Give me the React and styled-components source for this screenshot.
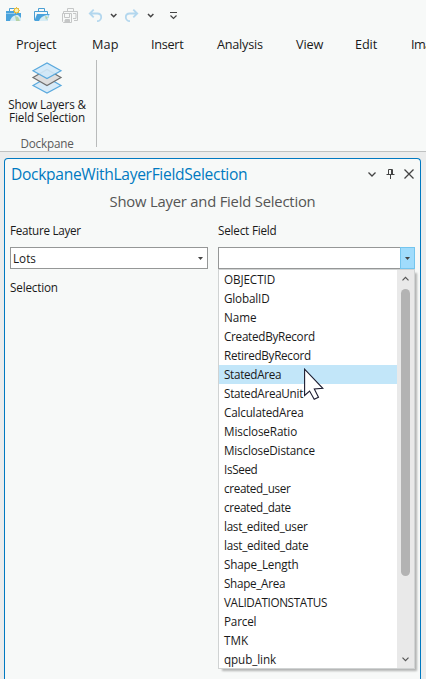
import React from 'react';
import styled, { createGlobalStyle } from 'styled-components';

const Global = createGlobalStyle`
  * { box-sizing: border-box; }
  html, body { margin: 0; background: #ebecec; }
  body {
    width: 426px; height: 679px; overflow: hidden;
    font-family: "Open Sans", "Noto Sans", sans-serif;
    font-size: 11.7px; color: #1a1a1a;
  }
`;

const Window = styled.div`
  width: 426px; height: 679px; overflow: hidden;
  display: flex; flex-direction: column;
`;

const Ribbon = styled.header`
  flex: none; height: 152px;
  background: #f7f9f8;
  border-bottom: 1px solid #bfc1c1;
  display: flex; flex-direction: column;
`;

const QuickAccess = styled.div`
  height: 31px; flex: none;
  display: flex; align-items: flex-start;
  svg { display: block; }
`;

const Tabs = styled.nav`
  height: 26px; flex: none;
  display: flex; align-items: center;
  padding-left: 16px;
  overflow: hidden;
`;

const Tab = styled.span`
  flex: none;
  width: ${(p) => p.$slot}px;
  font-size: 12.7px; line-height: 18px;
  letter-spacing: ${(p) => p.$spacing || 0}px;
  white-space: nowrap;
`;

const RibbonGroup = styled.section`
  width: 97px; height: 87px; margin-top: 3px;
  border-right: 1px solid #b9bbbb;
  display: flex; flex-direction: column; align-items: center;
  padding-right: 2px;
`;

const RibbonButton = styled.div`
  display: flex; flex-direction: column; align-items: center;
  text-align: center; line-height: 13px; white-space: nowrap;
  letter-spacing: ${(p) => p.$spacing}px;
  svg { display: block; margin: 2px 0 4px; }
`;

const GroupName = styled.span`
  margin-top: 11px; color: #5a5a5a; line-height: 16px; letter-spacing: -0.2px;
`;

const Pane = styled.main`
  margin: 6px 5px 0 4px; flex: 1;
  border: 1px solid #0079c1; border-bottom: 0;
  border-radius: 4px 4px 0 0;
  background: #f7f9f8;
  padding: 0 5px;
`;

const PaneHeader = styled.div`
  height: 30px; padding: 0 0 0 1px;
  display: flex; align-items: center; justify-content: space-between;
`;

const PaneTitle = styled.h1`
  margin: 0; font-weight: 400; font-size: 15.6px; line-height: 22px;
  color: #0079c1; letter-spacing: ${(p) => p.$spacing}px; white-space: nowrap;
`;

const PaneTools = styled.div`
  display: flex; align-items: center; height: 14px;
  svg { display: block; }
`;

const Subtitle = styled.h2`
  margin: 1px 0 0 0; font-weight: 400; font-size: 14.8px; line-height: 22px;
  color: #555; text-align: center; letter-spacing: ${(p) => p.$spacing}px;
  white-space: nowrap;
`;

const Fields = styled.div`
  display: grid; grid-template-columns: 198px 197px; column-gap: 10px;
  margin-top: 10px;
`;

const Field = styled.div`
  display: flex; flex-direction: column;
`;

const Label = styled.label`
  line-height: 16px; height: 25px;
  letter-spacing: ${(p) => p.$spacing || 0}px;
`;

const Combo = styled.div`
  height: 22px; border: 1px solid #959797; background: #fff;
  display: flex; align-items: center; justify-content: space-between;
  padding-left: 2px;
`;

const ComboArrow = styled.div`
  width: ${(p) => (p.$open ? 15 : 14)}px; height: 22px; flex: none;
  display: flex; align-items: center; justify-content: center;
  margin-right: ${(p) => (p.$open ? -1 : 0)}px;
  background: ${(p) => (p.$open ? '#a0dcfc' : 'transparent')};
  border: 1px solid ${(p) => (p.$open ? '#74c5ee' : 'transparent')};
`;

const Note = styled.div`
  margin-top: 10px; line-height: 16px; letter-spacing: -0.17px;
`;

const Anchor = styled.div`
  position: relative;
`;

const Menu = styled.div`
  position: absolute; left: 0; top: 0; width: 197px; height: 400px;
  border: 1px solid #d0d3d3; background: #fff;
  box-shadow: 3px 3px 2px -1px rgba(0, 0, 0, 0.28);
  display: flex;
`;

const Options = styled.ul`
  flex: 1; margin: 0; padding: 0; list-style: none; overflow: hidden;
`;

const Option = styled.li`
  height: 19px; line-height: 19px; padding-left: 5px;
  letter-spacing: ${(p) => p.$spacing || 0}px;
  background: ${(p) => (p.$active ? '#c2e6f9' : 'transparent')};
  white-space: nowrap;
`;

const ScrollBar = styled.div`
  width: 17px; background: #e9e9e9;
  display: flex; flex-direction: column; align-items: center;
  justify-content: space-between; padding-bottom: 2px;
`;

const Thumb = styled.div`
  width: 9px; height: 287px; border-radius: 4.5px; background: #b3b3b3;
  margin: 0 0 auto;
`;

const ScrollArrow = styled.svg`
  display: block; flex: none; margin: ${(p) => p.$margin};
`;

const Pointer = styled.svg`
  position: absolute; left: 86px; top: 99px;
`;

const QuickIcons = () => (
  <svg width="190" height="31" viewBox="0 0 190 31">
    <g>
      <path d="M9.500 11V8.500H14" fill="none" stroke="#4a9fd4" />
      <path d="M6 11h13v2h2v8H6z" fill="#4aa3dc" />
      <path d="M6 13.500h9" stroke="#8fc8ea" />
      <path d="M10 21c1-4 4-6 8-6l3 3v3z" fill="#d5ecf5" />
      <path d="M15 16l3 1 2 4h-4z" fill="#b6d3a7" />
      <path d="M16.500 7v7M13 10.500h7M14 8l5 5M19 8l-5 5" stroke="#e7c14c" />
      <circle cx="16.500" cy="10.500" r="2.300" fill="#fdf2b5" stroke="#e2b93b" />
    </g>
    <g>
      <path d="M38.500 11V8.500h6V11" fill="none" stroke="#4a9fd4" />
      <path d="M34.500 20V11.500h13V14" fill="#f7f9f8" stroke="#4a9fd4" />
      <path d="M37 14h12.600L47 21H34.300z" fill="#4aa3dc" />
      <path d="M39 21c1-3.500 4-5.500 8-6l2 .5L47 21z" fill="#d5ecf5" />
      <path d="M45 16l3 1-2 3z" fill="#b6d3a7" />
    </g>
    <g fill="none" stroke="#c5c7c7">
      <path d="M67.500 11V8.500h6V11M63.500 13V11.500h14v9H74M62.500 13.500h9v9h-8l-1-1z" />
      <path d="M64.500 14v3.500h5V14M65.500 22v-2.500h4V22M73 13.500h3v5h-3" />
      <path d="M65 20h4v2h-4z" fill="#c5c7c7" />
    </g>
    <g fill="none" stroke="#b3d7ee" strokeWidth="1.800">
      <path d="M93.700 9.700L89.800 13.500l3.900 3.800M90 13.500h7.200c2.500 0 4 1.700 4 3.700s-1.700 4-4.200 4" />
      <path d="M133.300 9.700l3.900 3.800-3.900 3.800M137 13.500h-7.200c-2.500 0-4 1.700-4 3.700s1.700 4 4.200 4" />
    </g>
    <g fill="none" stroke="#444" strokeWidth="1.500">
      <path d="M111 14l2.700 2.700L116.400 14M148 14l2.700 2.700L153.400 14" />
      <path d="M170 12.500h7" strokeWidth="1" />
      <path d="M170.500 15.500l3 3 3-3" strokeWidth="1.200" />
    </g>
  </svg>
);

const LayersIcon = () => (
  <svg width="32" height="32" viewBox="0 0 32 32">
    <path d="M2 23.500L16 15.500l14 8L16 31z" fill="#d8ebf8" stroke="#5aa9dd" strokeWidth="1.200" />
    <path d="M2 15.500L16 7.500l14 8-14 8z" fill="#dedede" stroke="#6f6f6f" strokeWidth="1.200" />
    <path d="M2 8.800L16 1l14 7.800-14 7.700z" fill="#d0e8f8" fillOpacity=".92" stroke="#5aa9dd" strokeWidth="1.200" />
  </svg>
);

const Triangle = () => (
  <svg width="5" height="3" viewBox="0 0 5 3"><path d="M0 0h5L2.500 3z" fill="#444" /></svg>
);

const tabs = [
  ['Project', 76, -0.15], ['Map', 59, 0.1], ['Insert', 66, -0.3], ['Analysis', 79, -0.25],
  ['View', 59, -0.1], ['Edit', 56, -0.1], ['Imagery', 60, -0.6],
];

const options = [
  ['OBJECTID', -0.1], ['GlobalID', -0.17], ['Name', 0], ['CreatedByRecord', -0.27],
  ['RetiredByRecord', -0.29], ['StatedArea', -0.3], ['StatedAreaUnit', -0.28],
  ['CalculatedArea', -0.19], ['MiscloseRatio', -0.12], ['MiscloseDistance', -0.18],
  ['IsSeed', -0.35], ['created_user', -0.35], ['created_date', -0.34],
  ['last_edited_user', -0.29], ['last_edited_date', -0.25], ['Shape_Length', -0.17],
  ['Shape_Area', -0.3], ['VALIDATIONSTATUS', -0.36], ['Parcel', -0.17], ['TMK', 0],
  ['qpub_link', -0.1],
];

export default function App() {
  return (
    <Window>
      <Global />
      <Ribbon>
        <QuickAccess><QuickIcons /></QuickAccess>
        <Tabs>
          {tabs.map(([name, slot, spacing]) => (
            <Tab key={name} $slot={slot} $spacing={spacing}>{name}</Tab>
          ))}
        </Tabs>
        <RibbonGroup>
          <RibbonButton $spacing={-0.15}>
            <LayersIcon />
            <span>Show Layers &amp;</span>
            <span>Field Selection</span>
          </RibbonButton>
          <GroupName>Dockpane</GroupName>
        </RibbonGroup>
      </Ribbon>
      <Pane>
        <PaneHeader>
          <PaneTitle $spacing={-0.32}>DockpaneWithLayerFieldSelection</PaneTitle>
          <PaneTools>
            <svg width="48" height="14" viewBox="0 0 48 14" fill="none" stroke="#444">
              <path d="M1.500 5.500L5 9l3.500-3.500" strokeWidth="1.300" />
              <path d="M21.500 7.500V2.500h4v5M19.500 7.500h8M23.500 8v4M24.500 2.500v5" />
              <path d="M37.500 2.500l9 9M46.500 2.500l-9 9" strokeWidth="1.300" />
            </svg>
          </PaneTools>
        </PaneHeader>
        <Subtitle $spacing={-0.2}>Show Layer and Field Selection</Subtitle>
        <Fields>
          <Field>
            <Label $spacing={-0.3}>Feature Layer</Label>
            <Combo>
              <span>Lots</span>
              <ComboArrow><Triangle /></ComboArrow>
            </Combo>
            <Note>Selection</Note>
          </Field>
          <Field>
            <Label $spacing={-0.2}>Select Field</Label>
            <Combo>
              <span />
              <ComboArrow $open><Triangle /></ComboArrow>
            </Combo>
            <Anchor>
              <Menu>
                <Options>
                  {options.map(([name, spacing]) => (
                    <Option key={name} $spacing={spacing} $active={name === 'StatedArea'}>{name}</Option>
                  ))}
                </Options>
                <ScrollBar>
                  <ScrollArrow $margin="6px 0 8px" width="9" height="5" viewBox="0 0 9 5">
                    <path d="M1.500 4.300l3-3 3 3" fill="none" stroke="#555" strokeWidth="1.200" />
                  </ScrollArrow>
                  <Thumb />
                  <ScrollArrow $margin="0 0 4px" width="9" height="5" viewBox="0 0 9 5">
                    <path d="M1.500 .7l3 3 3-3" fill="none" stroke="#555" strokeWidth="1.200" />
                  </ScrollArrow>
                </ScrollBar>
              </Menu>
              <Pointer width="20" height="32" viewBox="0 0 20 32">
                <path d="M.6 1.200v26.300l5-4.500 4.600 8.200 4.300-1.900-4.200-8.400 8.500-.6z" fill="#fff" stroke="#1c1c30" strokeWidth="1.100" />
              </Pointer>
            </Anchor>
          </Field>
        </Fields>
      </Pane>
    </Window>
  );
}
